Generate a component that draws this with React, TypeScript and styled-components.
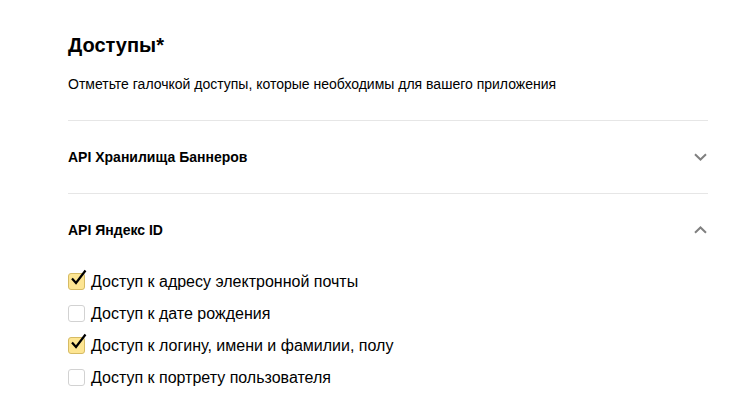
import React, { useState } from 'react'
import styled, { createGlobalStyle } from 'styled-components'

const Global = createGlobalStyle`
  body {
    margin: 0;
    background: #fff;
    font-family: 'Liberation Sans', Arial, sans-serif;
    color: #000;
  }
`

const Page = styled.div`
  width: 640px;
  padding: 33px 0 0 68px;
`

const Title = styled.h1`
  margin: 0;
  font-size: 20px;
  line-height: 24px;
  font-weight: 700;
`

const Subtitle = styled.p`
  margin: 19px 0 0;
  font-size: 14px;
  line-height: 16px;
  color: #000;
`

const Section = styled.div`
  border-top: 1px solid #e6e6e6;
  margin-top: 28px;

  & + & {
    margin-top: 0;
  }
`

const Header = styled.div`
  display: flex;
  align-items: center;
  justify-content: space-between;
  height: 72px;
  cursor: pointer;
`

const HeaderText = styled.span`
  font-size: 14px;
  font-weight: 700;
`

const Chevron = styled.svg<{ $open: boolean }>`
  width: 13px;
  height: 8px;
  margin-right: 1px;
  transform: ${(p) => (p.$open ? 'rotate(180deg)' : 'none')};
`

const List = styled.div`
  display: flex;
  flex-direction: column;
  gap: 15px;
  padding-top: 7px;
`

const Row = styled.label`
  display: flex;
  align-items: center;
  height: 17px;
  font-size: 16px;
  color: #000;
  cursor: pointer;
`

const Box = styled.span<{ $checked: boolean }>`
  position: relative;
  flex-shrink: 0;
  width: 15px;
  height: 15px;
  margin-right: 6px;
  border-radius: 3px;
  border: 1px solid ${(p) => (p.$checked ? '#d6bb64' : '#d2d2d2')};
  background: ${(p) => (p.$checked ? '#fde592' : '#fff')};
`

const Tick = styled.svg`
  position: absolute;
  left: 1px;
  top: -5px;
  width: 18px;
  height: 17px;
`

type Item = { label: string; checked: boolean }

const initial: Item[] = [
  { label: 'Доступ к адресу электронной почты', checked: true },
  { label: 'Доступ к дате рождения', checked: false },
  { label: 'Доступ к логину, имени и фамилии, полу', checked: true },
  { label: 'Доступ к портрету пользователя', checked: false },
]

const Arrow = ({ open }: { open: boolean }) => (
  <Chevron $open={open} viewBox='0 0 13 8' fill='none'>
    <path d='M1 1.2L6.5 6.5L12 1.2' stroke='#808080' strokeWidth='2' />
  </Chevron>
)

export default function App() {
  const [items, setItems] = useState(initial)
  const [open, setOpen] = useState({ banners: false, yandex: true })

  const toggle = (i: number) =>
    setItems(items.map((it, idx) => (idx === i ? { ...it, checked: !it.checked } : it)))

  return (
    <>
      <Global />
      <Page>
        <Title>Доступы*</Title>
        <Subtitle>Отметьте галочкой доступы, которые необходимы для вашего приложения</Subtitle>
        <Section>
          <Header onClick={() => setOpen({ ...open, banners: !open.banners })}>
            <HeaderText>API Хранилища Баннеров</HeaderText>
            <Arrow open={open.banners} />
          </Header>
        </Section>
        <Section>
          <Header onClick={() => setOpen({ ...open, yandex: !open.yandex })}>
            <HeaderText>API Яндекс ID</HeaderText>
            <Arrow open={open.yandex} />
          </Header>
          {open.yandex && (
            <List>
              {items.map((it, i) => (
                <Row key={it.label} onClick={() => toggle(i)}>
                  <Box $checked={it.checked}>
                    {it.checked && (
                      <Tick viewBox='0 0 18 17' fill='none'>
                        <path d='M2 9.5L6 14L15.5 1.5' stroke='#000' strokeWidth='2.2' />
                      </Tick>
                    )}
                  </Box>
                  {it.label}
                </Row>
              ))}
            </List>
          )}
        </Section>
      </Page>
    </>
  )
}
